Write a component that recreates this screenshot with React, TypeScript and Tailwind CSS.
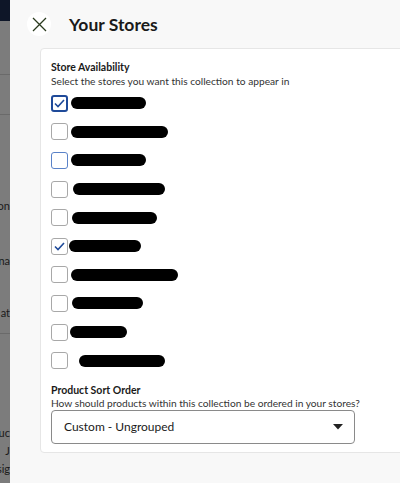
import React, { useState } from "react";

const stores = [
    { w: 75, off: 3, checked: true, focus: true },
    { w: 97, off: 3 },
    { w: 75, off: 3, hover: true },
    { w: 92, off: 5 },
    { w: 85, off: 4 },
    { w: 72, off: 1, checked: true },
    { w: 107, off: 3 },
    { w: 71, off: 4 },
    { w: 57, off: 2 },
    { w: 86, off: 11 },
];

function Check({ checked, focus, hover }: { checked?: boolean; focus?: boolean; hover?: boolean }) {
    const border = focus
        ? "border-2 border-[#1f4a99]"
        : hover
        ? "border border-[#5a82c8]"
        : "border border-[#a8a8a8]";
    return (
        <div className={`w-[17px] h-[17px] rounded-[3px] bg-white flex items-center justify-center shrink-0 ${border}`}>
            {checked && (
                <svg width="11" height="9" viewBox="0 0 11 9" fill="none">
                    <path d="M1 4.5 L4 7.5 L10 1" stroke="#1f4a99" strokeWidth="1.6" />
                </svg>
            )}
        </div>
    );
}

export default function App() {
    const [items, setItems] = useState(stores);

    return (
        <div className="w-[400px] h-[483px] flex overflow-hidden font-['Lato',sans-serif] text-[#1a1a1a]">
            {/* dimmed page behind the drawer */}
            <div className="w-[10px] shrink-0 bg-[#7c7c7c] flex flex-col text-[11px] text-[#1a1a1a] overflow-hidden">
                <div className="h-[21px] bg-[#0e1628] shrink-0" />
                <div className="h-[54px] border-b border-[#6a6a6a] shrink-0" />
                <div className="h-[40px] border-b border-[#6a6a6a] shrink-0" />
                <div className="h-[96px] shrink-0 flex items-end justify-end leading-none">on</div>
                <div className="h-[55px] shrink-0 flex items-end justify-end leading-none">na</div>
                <div className="h-[52px] shrink-0 flex items-end justify-end leading-none">at</div>
                <div className="h-[16px] border-b border-[#6a6a6a] shrink-0" />
                <div className="h-[104px] shrink-0 flex items-end justify-end leading-none">uc</div>
                <div className="h-[18px] shrink-0 flex items-end justify-end leading-none">J</div>
                <div className="h-[18px] shrink-0 flex items-end justify-end leading-none">sig</div>
            </div>

            <div className="flex-1 bg-[#f8f8f8] flex flex-col">
                <div className="h-[48px] flex items-center pl-[17px] shrink-0">
                    <div className="w-[24px] h-[24px] rounded-full bg-white flex items-center justify-center">
                        <svg width="15" height="15" viewBox="0 0 15 15" fill="none">
                            <path d="M1 1 L14 14 M14 1 L1 14" stroke="#2a3a1e" strokeWidth="1.3" />
                        </svg>
                    </div>
                    <h1 className="ml-[18px] text-[17.5px] font-bold leading-none mt-[2px]">Your Stores</h1>
                </div>

                <div className="ml-[30px] mr-[-10px] h-[405px] bg-white border border-[#e6e6e6] rounded-l-[4px] pl-[10px] pt-[11px]">
                    <div className="text-[10.5px] font-bold leading-[14px]">Store Availability</div>
                    <div className="text-[10.2px] leading-[14px] text-[#333]">
                        Select the stores you want this collection to appear in
                    </div>

                    <div className="flex flex-col mt-[1px]">
                        {items.map((s, i) => (
                            <div
                                key={i}
                                className="h-[28.6px] flex items-center cursor-pointer"
                                onClick={() =>
                                    setItems(items.map((x, j) => (j === i ? { ...x, checked: !x.checked } : x)))
                                }
                            >
                                <Check checked={s.checked} focus={s.focus} hover={s.hover} />
                                <div
                                    className="h-[12px] rounded-full bg-black"
                                    style={{ width: s.w, marginLeft: s.off }}
                                />
                            </div>
                        ))}
                    </div>

                    <div className="mt-[9px] text-[10.5px] font-bold leading-[13px]">Product Sort Order</div>
                    <div className="text-[10.2px] leading-[12px] text-[#333]">
                        How should products within this collection be ordered in your stores?
                    </div>
                    <div className="mt-[1px] w-[304px] h-[34px] border border-[#8a8a8a] rounded-[4px] flex items-center justify-between pl-[12px] pr-[11px]">
                        <span className="text-[12px] text-[#1a1a1a]">Custom - Ungrouped</span>
                        <svg width="10" height="6" viewBox="0 0 10 6">
                            <path d="M0 0 L10 0 L5 5.5 Z" fill="#222" />
                        </svg>
                    </div>
                </div>
            </div>
        </div>
    );
}
